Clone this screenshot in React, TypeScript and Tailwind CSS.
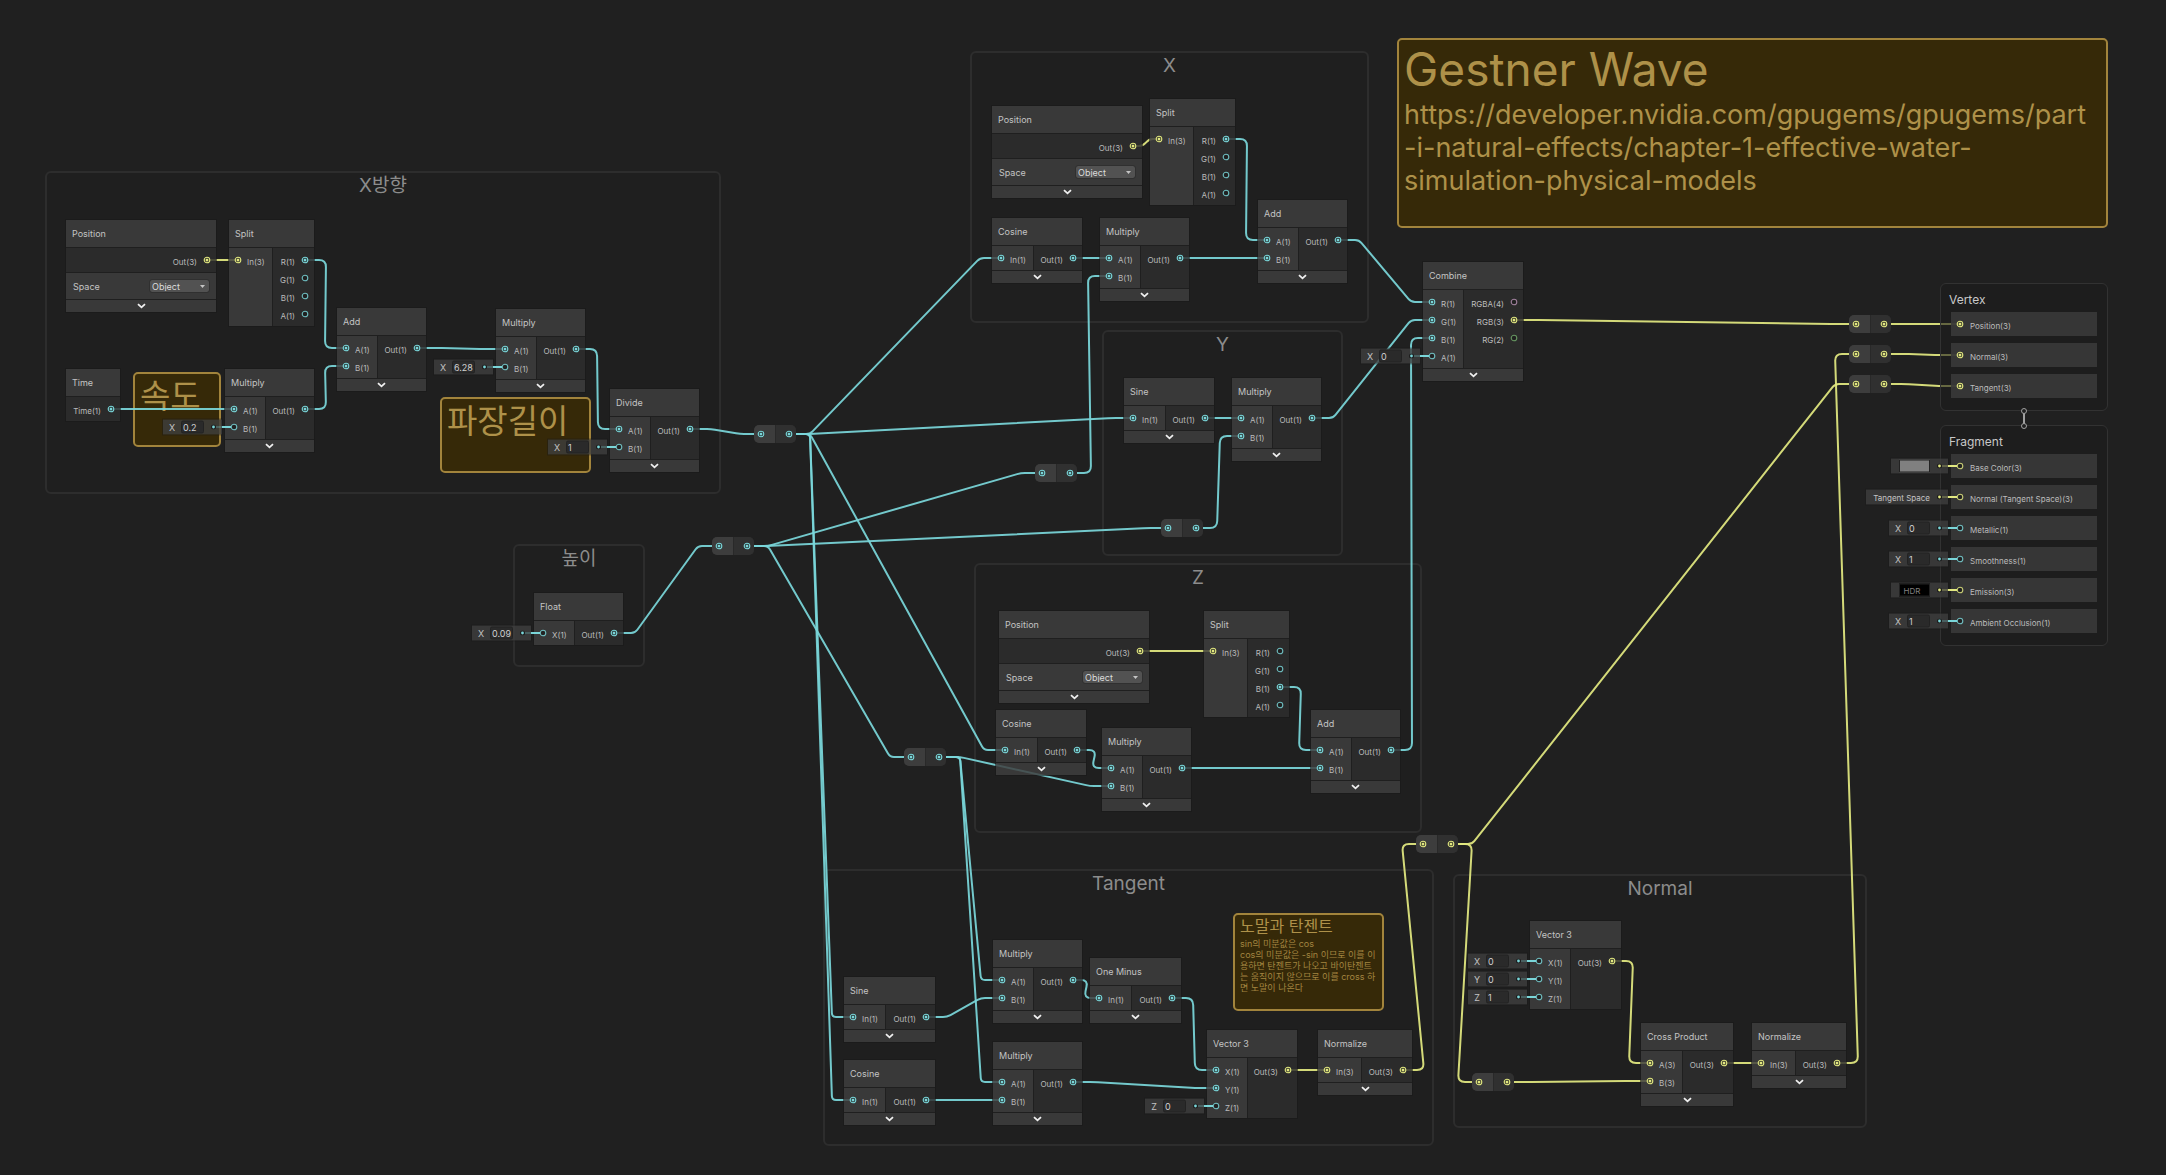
import React from "react";

type Kind = "float" | "vec3" | "vec4" | "vec2";
type Port = { label: string; kind?: Kind; open?: boolean; value?: { axis: string; text: string } };
type GraphNode = {
  id: string;
  title: string;
  x: number;
  y: number;
  w: number;
  inW?: number;
  ins?: Port[];
  outs: Port[];
  space?: boolean;
  fold?: boolean;
};
type Point = { x: number; y: number };

const COLORS: Record<Kind, string> = {
  float: "#7ad6d9",
  vec3: "#e2e880",
  vec4: "#b48fb0",
  vec2: "#70a86a",
};

const f = (label: string, open = false): Port => ({ label, open });
const v3 = (label: string): Port => ({ label, kind: "vec3" });
const withValue = (label: string, axis: string, text: string): Port => ({ label, open: true, value: { axis, text } });

const binary = (id: string, title: string, x: number, y: number, second: Port = f("B(1)")): GraphNode => ({
  id, title, x, y, w: 89, inW: 40, ins: [f("A(1)"), second], outs: [f("Out(1)")], fold: true,
});
const unary = (id: string, title: string, x: number, y: number, w = 90): GraphNode => ({
  id, title, x, y, w, inW: 41, ins: [f("In(1)")], outs: [f("Out(1)")], fold: true,
});
const position = (id: string, x: number, y: number): GraphNode => ({
  id, title: "Position", x, y, w: 150, outs: [v3("Out(3)")], space: true, fold: true,
});
const split = (id: string, x: number, y: number, used: number): GraphNode => ({
  id, title: "Split", x, y, w: 85, inW: 43, ins: [v3("In(3)")],
  outs: ["R(1)", "G(1)", "B(1)", "A(1)"].map((l, i) => f(l, i !== used)),
});
const normalize = (id: string, x: number, y: number): GraphNode => ({
  id, title: "Normalize", x, y, w: 94, inW: 43, ins: [v3("In(3)")], outs: [v3("Out(3)")], fold: true,
});

const NODES: GraphNode[] = [
  position("posA", 66, 220),
  split("splitA", 229, 220, 0),
  binary("addA", "Add", 337, 308),
  { id: "time", title: "Time", x: 66, y: 369, w: 54, outs: [f("Time(1)")] },
  binary("mul1", "Multiply", 225, 369, withValue("B(1)", "X", "0.2")),
  binary("mul2", "Multiply", 496, 309, withValue("B(1)", "X", "6.28")),
  binary("div", "Divide", 610, 389, withValue("B(1)", "X", "1")),
  { id: "float", title: "Float", x: 534, y: 593, w: 89, inW: 40, ins: [withValue("X(1)", "X", "0.09")], outs: [f("Out(1)")] },

  position("posB", 992, 106),
  split("splitB", 1150, 99, 0),
  unary("cosB", "Cosine", 992, 218),
  binary("mulB", "Multiply", 1100, 218),
  binary("addB", "Add", 1258, 200),

  unary("sineY", "Sine", 1124, 378),
  binary("mulY", "Multiply", 1232, 378),

  {
    id: "combine", title: "Combine", x: 1423, y: 262, w: 100, inW: 40,
    ins: [f("R(1)"), f("G(1)"), f("B(1)"), withValue("A(1)", "X", "0")],
    outs: [{ label: "RGBA(4)", kind: "vec4", open: true }, v3("RGB(3)"), { label: "RG(2)", kind: "vec2", open: true }],
    fold: true,
  },

  position("posZ", 999, 611),
  split("splitZ", 1204, 611, 2),
  unary("cosZ", "Cosine", 996, 710),
  binary("mulZ", "Multiply", 1102, 728),
  binary("addZ", "Add", 1311, 710),

  unary("sineT", "Sine", 844, 977, 91),
  unary("cosT", "Cosine", 844, 1060, 91),
  binary("mulT1", "Multiply", 993, 940),
  binary("mulT2", "Multiply", 993, 1042),
  unary("minus", "One Minus", 1090, 958, 91),
  { id: "vecT", title: "Vector 3", x: 1207, y: 1030, w: 90, inW: 40, ins: [f("X(1)"), f("Y(1)"), withValue("Z(1)", "Z", "0")], outs: [v3("Out(3)")] },
  normalize("normT", 1318, 1030),

  {
    id: "vecN", title: "Vector 3", x: 1530, y: 921, w: 91, inW: 40,
    ins: [withValue("X(1)", "X", "0"), withValue("Y(1)", "Y", "0"), withValue("Z(1)", "Z", "1")], outs: [v3("Out(3)")],
  },
  { id: "cross", title: "Cross Product", x: 1641, y: 1023, w: 92, inW: 41, ins: [v3("A(3)"), v3("B(3)")], outs: [v3("Out(3)")], fold: true },
  normalize("normN", 1752, 1023),
];

const REDIRECTS: { id: string; x: number; y: number; kind: Kind }[] = [
  { id: "r1", x: 754, y: 425, kind: "float" },
  { id: "r2", x: 712, y: 537, kind: "float" },
  { id: "r3", x: 1035, y: 464, kind: "float" },
  { id: "r4", x: 1161, y: 519, kind: "float" },
  { id: "r5", x: 904, y: 748, kind: "float" },
  { id: "r6", x: 1416, y: 835, kind: "vec3" },
  { id: "r7", x: 1472, y: 1073, kind: "vec3" },
  { id: "r8", x: 1849, y: 315, kind: "vec3" },
  { id: "r9", x: 1849, y: 345, kind: "vec3" },
  { id: "r10", x: 1849, y: 375, kind: "vec3" },
];

const FRAMES = [
  { title: "X방향", x: 45, y: 171, w: 676, h: 323 },
  { title: "높이", x: 513, y: 544, w: 132, h: 123 },
  { title: "X", x: 970, y: 51, w: 399, h: 272 },
  { title: "Y", x: 1102, y: 330, w: 241, h: 226 },
  { title: "Z", x: 974, y: 563, w: 448, h: 270 },
  { title: "Tangent", x: 823, y: 869, w: 611, h: 277 },
  { title: "Normal", x: 1453, y: 874, w: 414, h: 254 },
];

type Edge = { from: [string, number?]; to: [string, number?]; kind?: Kind; bend?: number };
const EDGES: Edge[] = [
  { from: ["posA"], to: ["splitA"], kind: "vec3", bend: 10 },
  { from: ["splitA"], to: ["addA"] },
  { from: ["time"], to: ["mul1"] },
  { from: ["mul1"], to: ["addA", 1] },
  { from: ["addA"], to: ["mul2"] },
  { from: ["mul2"], to: ["div"] },
  { from: ["div"], to: ["r1"] },
  { from: ["r1"], to: ["cosB"] },
  { from: ["r1"], to: ["sineY"] },
  { from: ["r1"], to: ["cosZ"] },
  { from: ["r1"], to: ["sineT"] },
  { from: ["r1"], to: ["cosT"] },
  { from: ["float"], to: ["r2"] },
  { from: ["r2"], to: ["r3"] },
  { from: ["r2"], to: ["r4"] },
  { from: ["r2"], to: ["r5"] },
  { from: ["r3"], to: ["mulB", 1] },
  { from: ["r4"], to: ["mulY", 1] },
  { from: ["posB"], to: ["splitB"], kind: "vec3", bend: 10 },
  { from: ["splitB"], to: ["addB"] },
  { from: ["cosB"], to: ["mulB"], bend: 12 },
  { from: ["mulB"], to: ["addB", 1] },
  { from: ["addB"], to: ["combine"] },
  { from: ["sineY"], to: ["mulY"], bend: 12 },
  { from: ["mulY"], to: ["combine", 1] },
  { from: ["addZ"], to: ["combine", 2] },
  { from: ["posZ"], to: ["splitZ"], kind: "vec3" },
  { from: ["splitZ", 2], to: ["addZ"] },
  { from: ["cosZ"], to: ["mulZ"], bend: 19 },
  { from: ["mulZ"], to: ["addZ", 1] },
  { from: ["r5"], to: ["mulZ", 1] },
  { from: ["r5"], to: ["mulT1"] },
  { from: ["r5"], to: ["mulT2"] },
  { from: ["sineT"], to: ["mulT1", 1] },
  { from: ["cosT"], to: ["mulT2", 1] },
  { from: ["mulT1"], to: ["minus"], bend: 15 },
  { from: ["minus"], to: ["vecT"] },
  { from: ["mulT2"], to: ["vecT", 1] },
  { from: ["vecT"], to: ["normT"], kind: "vec3", bend: 14 },
  { from: ["normT"], to: ["r6"], kind: "vec3" },
  { from: ["r6"], to: ["r10"], kind: "vec3" },
  { from: ["r6"], to: ["r7"], kind: "vec3" },
  { from: ["r7"], to: ["cross", 1], kind: "vec3" },
  { from: ["vecN"], to: ["cross"], kind: "vec3" },
  { from: ["cross"], to: ["normN"], kind: "vec3", bend: 14 },
  { from: ["normN"], to: ["r9"], kind: "vec3" },
  { from: ["combine", 1], to: ["r8"], kind: "vec3" },
  { from: ["r8"], to: ["vertex", 0], kind: "vec3" },
  { from: ["r9"], to: ["vertex", 1], kind: "vec3" },
  { from: ["r10"], to: ["vertex", 2], kind: "vec3" },
];

function portAt(id: string, index: number, side: "in" | "out"): Point {
  if (id === "vertex") return { x: 1960, y: 324 + index * 31 };
  const r = REDIRECTS.find((n) => n.id === id);
  if (r) return { x: r.x + (side === "in" ? 7 : 35), y: r.y + 9 };
  const n = NODES.find((m) => m.id === id)!;
  return { x: side === "in" ? n.x + 9 : n.x + n.w - 9, y: n.y + 40 + index * 18 };
}

/* Polyline with rounded corners. */
function roundedPath(pts: Point[], radius: number): string {
  let d = `M${pts[0].x} ${pts[0].y}`;
  for (let i = 1; i < pts.length - 1; i++) {
    const p = pts[i];
    const towards = (q: Point) => {
      const len = Math.hypot(q.x - p.x, q.y - p.y) || 1;
      const r = Math.min(radius, len / 2);
      return `${(p.x + ((q.x - p.x) / len) * r).toFixed(2)} ${(p.y + ((q.y - p.y) / len) * r).toFixed(2)}`;
    };
    d += `L${towards(pts[i - 1])}Q${p.x} ${p.y} ${towards(pts[i + 1])}`;
  }
  const end = pts[pts.length - 1];
  return `${d}L${end.x} ${end.y}`;
}

function edgePath(e: Edge): string {
  const a = portAt(e.from[0], e.from[1] ?? 0, "out");
  const b = portAt(e.to[0], e.to[1] ?? 0, "in");
  const bend = e.bend ?? 21;
  const backwards = b.x - bend <= a.x + bend + 4;
  return roundedPath([a, { x: a.x + bend, y: a.y }, { x: b.x - bend, y: b.y }, b], backwards ? 7 : 4);
}

function Wires() {
  return (
    <svg className="pointer-events-none absolute inset-0 h-full w-full" fill="none" aria-hidden="true">
      {EDGES.map((e, i) => (
        <path key={i} d={edgePath(e)} stroke={COLORS[e.kind ?? "float"]} strokeWidth={2} opacity={0.93} />
      ))}
    </svg>
  );
}

function Dot({ kind = "float", open = false }: { kind?: Kind; open?: boolean }) {
  return (
    <svg className="size-2 shrink-0" viewBox="0 0 8 8" aria-hidden="true">
      <circle cx="4" cy="4" r="2.8" fill="#1f1f1f" stroke={COLORS[kind]} strokeWidth="1.1" opacity={open ? 0.85 : 1} />
      {!open && <circle cx="4" cy="4" r="1.5" fill={COLORS[kind]} />}
    </svg>
  );
}

function ValueShell({ kind = "float", children }: { kind?: Kind; children: React.ReactNode }) {
  return (
    <span className="absolute top-1/2 right-full mr-[3px] flex h-[15px] -translate-y-1/2 items-center bg-[#3f3f3f]/80 pr-[6px] outline outline-[#1a1a1a]/40">
      {children}
      <svg className="size-[5px] shrink-0" viewBox="0 0 5 5" aria-hidden="true">
        <circle cx="2.5" cy="2.5" r="2.5" fill="#1c1c1c" />
        <circle cx="2.5" cy="2.5" r="1.4" fill={COLORS[kind]} />
      </svg>
      <svg className="absolute top-[6px] left-full h-[3px] w-[9px]" viewBox="0 0 9 3" aria-hidden="true">
        <path d="M0 1.5H9" stroke={COLORS[kind]} strokeWidth="2" />
      </svg>
      <svg className="absolute top-[6px] right-0 h-[3px] w-[6px] opacity-25" viewBox="0 0 6 3" aria-hidden="true">
        <path d="M0 1.5H6" stroke={COLORS[kind]} strokeWidth="2" />
      </svg>
    </span>
  );
}

function AxisValue({ axis, text, owner }: { axis: string; text: string; owner: string }) {
  return (
    <ValueShell>
      <label className="flex items-center text-[9px] text-[#c4c4c4]">
        <span className="w-[18px] text-center">{axis}</span>
        <input
          defaultValue={text}
          aria-label={`${owner} ${axis}`}
          className="mr-[7px] h-[13px] w-[23px] rounded-[2px] border border-[#222] bg-[#2a2a2a] pl-[1px] text-[9px] leading-none text-[#d0d0d0] outline-none"
        />
      </label>
    </ValueShell>
  );
}

function InPort({ port, owner }: { port: Port; owner: string }) {
  return (
    <li className="relative flex h-[18px] items-center gap-[5px] pl-[5px]">
      <Dot kind={port.kind} open={port.open} />
      <span className="pt-[3px]">{port.label}</span>
      {port.value && <AxisValue axis={port.value.axis} text={port.value.text} owner={owner} />}
    </li>
  );
}

function OutPort({ port }: { port: Port }) {
  return (
    <li className="flex h-[18px] items-center justify-end gap-[6px] pr-[5px]">
      <span className="pt-[3px]">{port.label}</span>
      <Dot kind={port.kind} open={port.open} />
    </li>
  );
}

function NodeCard({ node }: { node: GraphNode }) {
  return (
    <article
      className="absolute flex flex-col gap-px bg-[#232323]/20 text-[9px] leading-none whitespace-nowrap text-[#bcbcbc] outline outline-[#191919]/60"
      style={{ left: node.x, top: node.y, width: node.w }}
    >
      <h3 className="flex h-[27px] items-center bg-[#404040]/80 px-[6px] text-[9px] text-[#c4c4c4]">{node.title}</h3>
      <div className="flex gap-px text-[8px]">
        {node.ins && (
          <ul className="shrink-0 bg-[#404040]/80 py-[3px]" style={{ width: node.inW }}>
            {node.ins.map((p) => <InPort key={p.label} port={p} owner={node.title} />)}
          </ul>
        )}
        <ul className="grow bg-[#2e2e2e]/80 py-[3px]">
          {node.outs.map((p) => <OutPort key={p.label} port={p} />)}
        </ul>
      </div>
      {node.space && (
        <label className="flex h-[26px] items-center justify-between bg-[#404040]/80 px-[7px] text-[#c4c4c4]">
          Space
          <span className="relative flex">
            <select className="h-3 w-[59px] appearance-none rounded-[2px] bg-[#525252] pl-[2px] text-[9px] leading-none text-[#dcdcdc] outline outline-[#303030]">
              <option>Object</option>
              <option>View</option>
              <option>World</option>
            </select>
            <svg className="pointer-events-none absolute top-[5px] right-[4px] h-[3px] w-[5px]" viewBox="0 0 5 3" aria-hidden="true">
              <path d="M0 0H5L2.5 3Z" fill="#c4c4c4" />
            </svg>
          </span>
        </label>
      )}
      {node.fold && (
        <button type="button" aria-label={`Toggle ${node.title} preview`} className="flex h-3 items-center justify-center bg-[#404040]/80">
          <svg className="h-[6px] w-[9px]" viewBox="0 0 9 6" fill="none" aria-hidden="true">
            <path d="M1 1.2L4.5 4.4L8 1.2" stroke="#f0f0f0" strokeWidth="1.8" />
          </svg>
        </button>
      )}
    </article>
  );
}

function Redirect({ x, y, kind }: { x: number; y: number; kind: Kind }) {
  return (
    <div className="absolute flex h-[18px] w-[42px] gap-px overflow-hidden rounded-[5px] bg-[#292929]" style={{ left: x, top: y }}>
      <span className="flex flex-1 items-center bg-[#3d3d3d] pl-[3px]"><Dot kind={kind} /></span>
      <span className="flex flex-1 items-center justify-end bg-[#303030] pr-[3px]"><Dot kind={kind} /></span>
    </div>
  );
}

type BlockPort = Port & { swatch?: "gray" | "hdr"; tag?: string };

function Stack({ title, x, y, blocks }: { title: string; x: number; y: number; blocks: BlockPort[] }) {
  return (
    <section className="absolute w-[168px] rounded-[6px] border border-[#323232] bg-[#1c1c1c]/60 px-[10px] pb-3" style={{ left: x, top: y }}>
      <h2 className="-ml-[2px] pt-[9px] pb-[6px] text-[12px] leading-[13px] text-[#c8c8c8]">{title}</h2>
      <ul className="flex flex-col gap-[7px] text-[8px] leading-none text-[#bcbcbc]">
        {blocks.map((b) => (
          <li key={b.label} className="relative flex h-6 items-center gap-[6px] bg-[#3a3a3a]/90 pl-[5px]">
            <Dot kind={b.kind} open={b.open} />
            <span className="pt-[3px]">{b.label}</span>
            {b.value && <AxisValue axis={b.value.axis} text={b.value.text} owner={b.label} />}
            {b.tag && (
              <ValueShell kind={b.kind}>
                <span className="px-[7px] text-[8px] whitespace-nowrap text-[#c4c4c4]">{b.tag}</span>
              </ValueShell>
            )}
            {b.swatch === "gray" && (
              <ValueShell kind={b.kind}>
                <button type="button" aria-label="Base color" className="mr-[7px] ml-[8px] h-[13px] w-[31px] border border-[#222] bg-[#808080]" />
              </ValueShell>
            )}
            {b.swatch === "hdr" && (
              <ValueShell kind={b.kind}>
                <button type="button" className="mr-[7px] ml-[8px] h-[13px] w-[31px] border border-[#222] bg-black pr-[5px] text-center text-[8px] leading-none text-[#808080]">HDR</button>
              </ValueShell>
            )}
          </li>
        ))}
      </ul>
    </section>
  );
}

const NOTE = "absolute overflow-hidden rounded-[5px] border-2 border-[#a2843c] bg-[#362908] text-[#ae9149]";

export default function App() {
  return (
    <main className="relative min-h-screen w-full overflow-hidden bg-[#202020] font-['Inter','Noto_Sans_CJK_KR',sans-serif] [font-optical-sizing:none]">
      {FRAMES.map((g) => (
        <section
          key={g.title}
          className="absolute rounded-[6px] border-2 border-[#2d2d2d] bg-[#1f1f1f] text-center"
          style={{ left: g.x, top: g.y, width: g.w, height: g.h }}
        >
          <h2 className="pt-px text-[19px] leading-[24px] text-[#8c8c8c]">{g.title}</h2>
        </section>
      ))}

      <aside className={`${NOTE} top-[38px] left-[1397px] h-[190px] w-[711px] px-[5px]`}>
        <h1 className="text-[46px] leading-[58px]">Gestner Wave</h1>
        <p className="text-[27px] leading-[33px]">
          https://developer.nvidia.com/gpugems/gpugems/part
          <br />
          -i-natural-effects/chapter-1-effective-water-
          <br />
          simulation-physical-models
        </p>
      </aside>
      <aside className={`${NOTE} top-[372px] left-[133px] h-[75px] w-[88px] px-[5px]`}>
        <p className="text-[33px] leading-[44px]">속도</p>
      </aside>
      <aside className={`${NOTE} top-[397px] left-[440px] h-[76px] w-[151px] px-[5px]`}>
        <p className="text-[33px] leading-[44px]">파장길이</p>
      </aside>
      <aside className={`${NOTE} top-[913px] left-[1233px] h-[98px] w-[151px] px-[5px]`}>
        <h2 className="text-[16px] leading-[23px]">노말과 탄젠트</h2>
        <p className="text-[9px] leading-[11px] whitespace-nowrap text-[#a38540]">
          sin의 미분값은 cos
          <br />
          cos의 미분값은 -sin 이므로 이를 이
          <br />
          용하면 탄젠트가 나오고 바이탄젠트
          <br />
          는 움직이지 않으므로 이를 cross 하
          <br />
          면 노말이 나온다
        </p>
      </aside>

      <Wires />

      {NODES.map((n) => <NodeCard key={n.id} node={n} />)}
      {REDIRECTS.map((r) => <Redirect key={r.id} x={r.x} y={r.y} kind={r.kind} />)}

      <Stack title="Vertex" x={1940} y={283} blocks={[v3("Position(3)"), v3("Normal(3)"), v3("Tangent(3)")]} />
      <Stack
        title="Fragment"
        x={1940}
        y={425}
        blocks={[
          { label: "Base Color(3)", kind: "vec3", open: true, swatch: "gray" },
          { label: "Normal (Tangent Space)(3)", kind: "vec3", open: true, tag: "Tangent Space" },
          withValue("Metallic(1)", "X", "0"),
          withValue("Smoothness(1)", "X", "1"),
          { label: "Emission(3)", kind: "vec3", open: true, swatch: "hdr" },
          withValue("Ambient Occlusion(1)", "X", "1"),
        ]}
      />
      <svg className="absolute top-[407px] left-[2020px] h-[23px] w-2" viewBox="0 0 8 23" aria-hidden="true">
        <path d="M4 6V17" stroke="#a0a0a0" strokeWidth="2" />
        <circle cx="4" cy="4" r="2.5" fill="#1f1f1f" stroke="#a0a0a0" />
        <circle cx="4" cy="19" r="2.5" fill="#1f1f1f" stroke="#a0a0a0" />
      </svg>
    </main>
  );
}
